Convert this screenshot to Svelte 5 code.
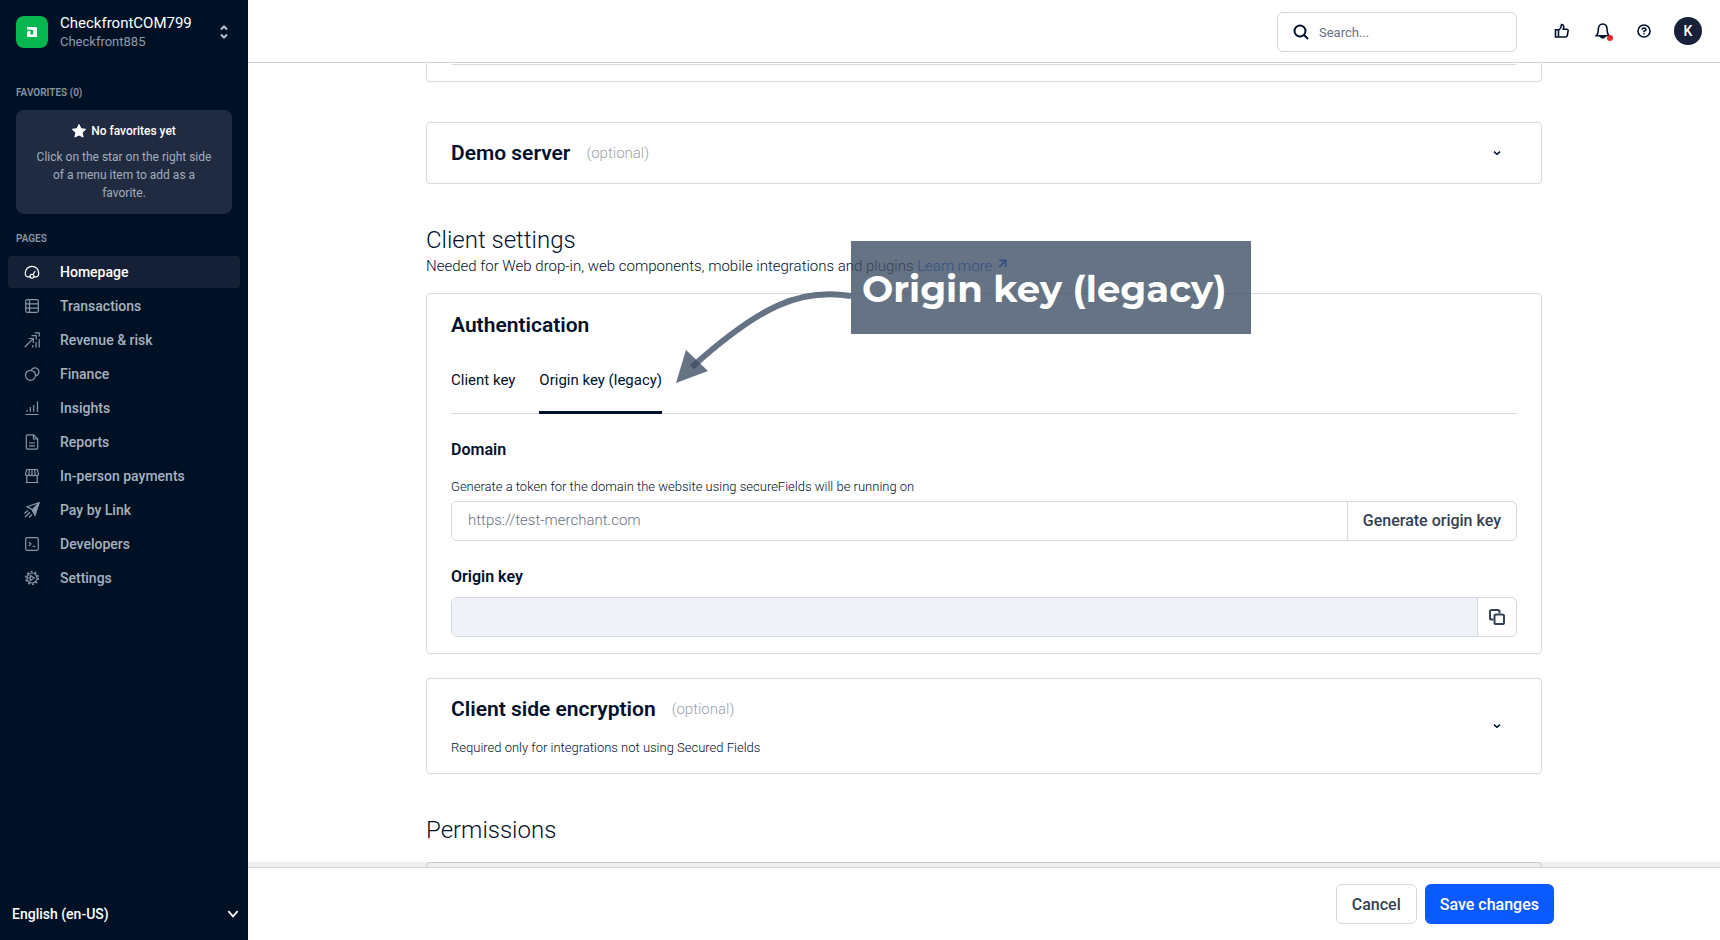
<script>
  // Sidebar
  const pages = ['Homepage', 'Transactions', 'Revenue & risk', 'Finance', 'Insights', 'Reports', 'In-person payments', 'Pay by Link', 'Developers', 'Settings'];
  let activePage = 'Homepage';
  let language = 'en-US';

  // Authentication card
  const tabs = ['Client key', 'Origin key (legacy)'];
  let activeTab = 'Origin key (legacy)';
  let domain = '';
  let originKey = '';
  let search = '';
</script>

<div class="app">
  <aside class="sidebar">
    <button class="account" type="button">
      <svg class="logo" viewBox="0 0 32 32" aria-hidden="true">
        <rect width="32" height="32" rx="8" fill="#06b650" />
        <path d="M11 11h8.500q1.500 0 1.500 1.500V21h-8.500q-1.500 0-1.500-1.500v-3q0-1.500 1.500-1.500h2v3.400h2.600v-4.600H11z" fill="#fff" />
      </svg>
      <span class="account-text">
        <span class="account-name">CheckfrontCOM799</span>
        <span class="account-sub">Checkfront885</span>
      </span>
      <svg class="sorter" viewBox="0 0 8 14" aria-hidden="true">
        <path d="M1 4.500 4 1.500 7 4.500M1 9.500l3 3 3-3" />
      </svg>
    </button>

    <h2 class="group-title">FAVORITES (0)</h2>
    <div class="favorites">
      <p class="favorites-title">
        <svg viewBox="0 0 14 14" aria-hidden="true"><path d="M7 .5 9 4.700l4.600.6-3.400 3.200.9 4.600L7 10.900l-4.100 2.200.9-4.600L.4 5.300 5 4.700z" fill="currentColor" stroke="currentColor" stroke-linejoin="round" /></svg>
        No favorites yet
      </p>
      <p class="favorites-hint">Click on the star on the right side of a menu item to add as a favorite.</p>
    </div>

    <h2 class="group-title pages-title">PAGES</h2>
    <nav>
      {#each pages as page}
        <a href="#top" class="nav-item" class:active={activePage === page} on:click|preventDefault={() => (activePage = page)}>
          <svg class="nav-icon" viewBox="0 0 16 16" aria-hidden="true">
            {#if page === 'Homepage'}
              <path d="M6 12.800H3.700C2.200 12.800 1.300 11 1.300 9a6.700 6.700 0 0 1 13.400 0c0 2-.9 3.800-2.400 3.800H10M9 10.500l2.300-3.500" />
              <circle cx="8" cy="12.300" r="1.900" />
            {:else if page === 'Transactions'}
              <rect x="1.700" y="1.700" width="12.600" height="12.600" rx="1.500" />
              <path d="M1.700 5.800h12.600M1.700 10.200h12.600M5.500 1.700v12.600" />
            {:else if page === 'Revenue & risk'}
              <path d="M.8 15 9 6.800M4.800 6.500h4.500V11M7.500 3.600h4.700v4M10.500.9h4.700v3.600M8.700 13v2.500M12 10v5.500M15.200 7v8.500" />
            {:else if page === 'Finance'}
              <circle cx="6.500" cy="9.300" r="5" />
              <path d="M7.300 4.200a4 4 0 1 1 4.400 5.600" />
            {:else if page === 'Insights'}
              <path d="M1.500 14.500h13M3 11.800V10M6.300 11.800V7M9.700 11.800V5M13.500 11.800V1.500" />
            {:else if page === 'Reports'}
              <path d="M9.500.8H3.700q-1.400 0-1.400 1.400v11.600q0 1.400 1.400 1.400h8.600q1.400 0 1.400-1.400V5zV5h4.200M5 9h6M5 11.800h6" />
            {:else if page === 'In-person payments'}
              <path d="M2.800 1.500h10.400l1.300 4.300q0 2-1.700 2t-1.700-2q0 2-1.600 2T8 5.800q0 2-1.500 2t-1.600-2q0 2-1.700 2t-1.700-2zM5.500 1.500l-.6 4.300M8 1.500v4.300M10.500 1.500l.6 4.300M2.800 7.800v6.700M13.200 7.800v6.700M1.500 14.500h13" />
            {:else if page === 'Pay by Link'}
              <path d="m3 4.700 12-4-4 12.300-2.800-5.200z" />
              <path d="m15 .7-4 12.300-2.800-5.200z" fill="currentColor" />
              <path d="M.5 11.500 3.800 8.500M1 15l5-4.800M5 15.500l3-3" />
            {:else if page === 'Developers'}
              <rect x="1.700" y="1.700" width="12.600" height="12.600" rx="1.500" />
              <path d="M4.800 5.800 7 8l-2.200 2.200M8.700 10.300h2.500" />
            {:else}
              <circle cx="8" cy="8" r="5" />
              <circle cx="8" cy="8" r="6.300" stroke-width="1.600" stroke-dasharray="1.800 2.150" />
              <path d="M6.300 5.400v5.200l4-2.600zM3 8h3" />
            {/if}
          </svg>
          {page}
        </a>
      {/each}
    </nav>

    <label class="language">
      <select bind:value={language} aria-label="Language">
        <option value="en-US">English (en-US)</option>
      </select>
      <svg viewBox="0 0 12 12" aria-hidden="true"><path d="M2 3.500 6 8l4-4.500" /></svg>
    </label>
  </aside>

  <div class="page">
    <header class="topbar">
      <label class="search">
        <svg viewBox="0 0 16 16" aria-hidden="true">
          <circle cx="7" cy="7" r="5.500" />
          <path d="m11 11 4 4" />
        </svg>
        <input type="search" placeholder="Search..." aria-label="Search" bind:value={search} />
      </label>
      <div class="actions">
        <button class="icon-button" type="button" aria-label="Feedback">
          <svg viewBox="0 0 16 16">
            <path d="M1.500 6.700h3v7.300h-3zM4.500 7.500C6.500 6 7.300 4.300 7.500 1.500c1.700 0 2.400 1 2.200 2.500l-.4 2.300h3.500q1.500.1 1.300 1.600l-.8 4.600q-.3 1.500-1.800 1.500h-7" />
          </svg>
        </button>
        <button class="icon-button" type="button" aria-label="Notifications">
          <svg viewBox="0 0 16 16">
            <path d="M1.300 12.700c1.500-1.500 2-3.500 2-6C3.300 3 5 1 7.700 1s4.400 2 4.400 5.700c0 2.500.5 4.500 2 6z" />
            <path d="M5.500 13.500q2.200 3 4.400 0z" fill="currentColor" />
          </svg>
          <span class="dot"></span>
        </button>
        <button class="icon-button" type="button" aria-label="Help">
          <svg viewBox="0 0 16 16">
            <circle cx="8" cy="8" r="6" />
            <path d="M6.100 6.700Q6.200 5 8 5t1.900 1.600Q9.900 7.600 8 8.300v.9M8 10.200v1.300" />
          </svg>
        </button>
      </div>
      <button class="avatar" type="button">K</button>
    </header>

    <main>
      <div class="content">
        <section class="card card-tail"><div class="tail-field"></div></section>

        <section class="card collapsed">
          <h3>Demo server <span class="optional">(optional)</span></h3>
          <button class="toggle" type="button" aria-label="Expand demo server">
            <svg viewBox="0 0 8 8"><path d="M1 2.700 4 5.300l3-2.600" /></svg>
          </button>
        </section>

        <h2 class="section-title">Client settings</h2>
        <p class="section-text">
          Needed for Web drop-in, web components, mobile integrations and plugins
          <a href="#learn">Learn more <svg viewBox="0 0 10 10" aria-hidden="true"><path d="M1.500 1.500h7v7M8.500 1.500l-7 7.500" /></svg></a>
        </p>

        <section class="card auth">
          <h3>Authentication</h3>
          <div class="tabs" role="tablist">
            {#each tabs as tab}
              <button type="button" role="tab" aria-selected={activeTab === tab} class:active={activeTab === tab} on:click={() => (activeTab = tab)}>{tab}</button>
            {/each}
          </div>

          <h4>Domain</h4>
          <label class="hint" for="domain">Generate a token for the domain the website using secureFields will be running on</label>
          <div class="field">
            <input id="domain" type="text" placeholder="https://test-merchant.com" bind:value={domain} />
            <button type="button">Generate origin key</button>
          </div>

          <label class="key-label" for="origin-key">Origin key</label>
          <div class="field">
            <input id="origin-key" class="readonly" type="text" readonly bind:value={originKey} />
            <button class="copy" type="button" aria-label="Copy origin key">
              <svg viewBox="0 0 16 16">
                <path d="M4.500 10.500H2.600Q1 10.500 1 8.900V2.600Q1 1 2.600 1h6.300q1.600 0 1.600 1.600v1.700" />
                <rect x="5.500" y="5.500" width="9.500" height="9.500" rx="1.600" />
              </svg>
            </button>
          </div>

          <div class="annotation">
            <svg viewBox="0 0 175 142" aria-hidden="true">
              <path class="arrow-line" d="M175 55C125 47 85 64 16 126" />
              <path class="arrow-head" d="M0 142 10 109l22 21z" />
            </svg>
            <div class="annotation-label">Origin key (legacy)</div>
          </div>
        </section>

        <section class="card collapsed tall">
          <div>
            <h3>Client side encryption <span class="optional">(optional)</span></h3>
            <p class="hint">Required only for integrations not using Secured Fields</p>
          </div>
          <button class="toggle" type="button" aria-label="Expand client side encryption">
            <svg viewBox="0 0 8 8"><path d="M1 2.700 4 5.300l3-2.600" /></svg>
          </button>
        </section>

        <h2 class="section-title">Permissions</h2>
        <section class="card permissions-card"></section>
      </div>
    </main>

    <footer>
      <button class="cancel" type="button">Cancel</button>
      <button class="save" type="button">Save changes</button>
    </footer>
  </div>
</div>

<style>
  :global(body) {
    margin: 0;
  }

  .app {
    display: flex;
    height: 100vh;
    overflow: hidden;
    font-family: Roboto, 'Liberation Sans', sans-serif;
    color: #00112c;
    background: #fff;
  }

  .app * {
    box-sizing: border-box;
  }

  h2, h3, h4, p {
    margin: 0;
  }

  button, input, select {
    font-family: inherit;
    color: inherit;
  }

  button {
    padding: 0;
    border: 0;
    background: none;
    cursor: pointer;
  }

  svg {
    display: block;
    flex: none;
    fill: none;
    stroke: currentColor;
  }

  /* Sidebar */
  .sidebar {
    display: flex;
    flex-direction: column;
    flex: none;
    width: 248px;
    background: #001126;
    color: #fff;
  }

  .account {
    display: flex;
    align-items: center;
    gap: 12px;
    padding: 13px 20px 13px 16px;
    text-align: left;
    color: #fff;
  }

  .logo {
    width: 32px;
    height: 32px;
    stroke: none;
  }

  .account-text {
    flex: 1;
  }

  .account-name, .account-sub {
    display: block;
    font-size: 15px;
    line-height: 20px;
  }

  .account-sub {
    font-size: 13px;
    line-height: 18px;
    color: #8f9baa;
  }

  .sorter {
    width: 8px;
    height: 14px;
    color: #b4bcc8;
    stroke-width: 2px;
  }

  .group-title {
    padding: 0 16px;
    margin-top: 21px;
    font-size: 10px;
    line-height: 16px;
    font-weight: 600;
    color: #8995a6;
  }

  .favorites {
    margin: 9px 16px 0;
    padding: 12px 16px;
    border-radius: 8px;
    background: #202b41;
    text-align: center;
  }

  .favorites-title {
    display: flex;
    justify-content: center;
    gap: 5px;
    margin-bottom: 8px;
    font-size: 12px;
    line-height: 18px;
    font-weight: 500;
  }

  .favorites-title svg {
    width: 14px;
    height: 14px;
    margin-top: 2px;
  }

  .favorites-hint {
    font-size: 12px;
    line-height: 18px;
    color: #a3adbb;
  }

  .pages-title {
    margin-top: 17px;
  }

  nav {
    display: flex;
    flex-direction: column;
    gap: 2px;
    padding: 9px 8px 0;
  }

  .nav-item {
    display: flex;
    align-items: center;
    gap: 20px;
    height: 32px;
    padding: 0 16px;
    border-radius: 4px;
    font-size: 14px;
    font-weight: 500;
    text-decoration: none;
    color: #a6b1bf;
  }

  .nav-item.active {
    background: #151f35;
    color: #fff;
  }

  .nav-icon {
    width: 16px;
    height: 16px;
    color: #8a96a5;
    stroke-width: 1.2px;
  }

  .active .nav-icon {
    color: #fff;
  }

  .language {
    display: flex;
    align-items: center;
    margin-top: auto;
    padding: 0 8px 16px 12px;
  }

  .language select {
    flex: 1;
    padding: 0;
    border: 0;
    appearance: none;
    background: transparent;
    font-size: 14px;
    line-height: 20px;
    font-weight: 500;
  }

  .language svg {
    width: 14px;
    height: 14px;
    stroke-width: 1.5px;
  }

  /* Top bar */
  .page {
    display: flex;
    flex: 1;
    flex-direction: column;
    min-width: 0;
  }

  .topbar {
    display: flex;
    align-items: center;
    justify-content: flex-end;
    flex: none;
    height: 63px;
    padding: 0 18px;
    border-bottom: 1px solid #d0d3da;
  }

  .search {
    display: flex;
    align-items: center;
    gap: 10px;
    width: 240px;
    height: 40px;
    margin-top: 2px;
    padding: 0 15px;
    border: 1px solid #d5d8de;
    border-radius: 6px;
  }

  .search svg {
    width: 16px;
    height: 16px;
    stroke-width: 2px;
  }

  .search input {
    flex: 1;
    min-width: 0;
    padding: 0;
    border: 0;
    outline: 0;
    font-size: 13px;
  }

  input::placeholder {
    color: #687282;
    opacity: 1;
  }

  .actions {
    display: flex;
    gap: 25px;
    margin: 0 22px 0 37px;
  }

  .icon-button {
    position: relative;
  }

  .icon-button svg {
    width: 16px;
    height: 16px;
    stroke-width: 1.6px;
  }

  .dot {
    position: absolute;
    right: -2px;
    bottom: -2px;
    width: 6px;
    height: 6px;
    border-radius: 50%;
    background: #e22d2d;
  }

  .avatar {
    width: 28px;
    height: 28px;
    border-radius: 50%;
    background: #17223a;
    color: #fff;
    font-size: 14px;
    font-weight: 500;
  }

  /* Content */
  main {
    flex: 1;
    min-height: 0;
    overflow: hidden;
    padding: 0 24px;
  }

  .content {
    max-width: 1116px;
    margin: 0 auto;
  }

  .card {
    position: relative;
    padding: 0 24px;
    border: 1px solid #d8dade;
    border-radius: 4px;
  }

  .card-tail {
    margin-bottom: 40px;
    padding-bottom: 16px;
    border-top: 0;
    border-radius: 0 0 4px 4px;
  }

  .tail-field {
    height: 2px;
    border-bottom: 1px solid #d8dade;
    border-radius: 0 0 4px 4px;
  }

  h3 {
    display: flex;
    align-items: center;
    gap: 16px;
    font-size: 21px;
    line-height: 28px;
    font-weight: 600;
  }

  .optional {
    font-size: 15px;
    font-weight: 300;
    color: #99a3ad;
  }

  .collapsed {
    display: flex;
    align-items: center;
    justify-content: space-between;
    height: 62px;
  }

  .tall {
    height: 96px;
    margin-top: 24px;
  }

  .toggle {
    margin-right: 16px;
  }

  .toggle svg {
    width: 8px;
    height: 8px;
    stroke-width: 1.6px;
  }

  .section-title {
    margin-top: 40px;
    font-size: 24px;
    line-height: 32px;
    font-weight: 300;
  }

  .section-text {
    margin-bottom: 17px;
    font-size: 15px;
    line-height: 20px;
    font-weight: 300;
  }

  .section-text a {
    color: #0059ff;
    text-decoration: none;
  }

  .section-text svg {
    display: inline;
    width: 9px;
    height: 9px;
    margin-left: 2px;
    vertical-align: 3px;
    stroke-width: 2px;
  }

  .auth {
    padding-top: 17px;
    padding-bottom: 16px;
  }

  .tabs {
    display: flex;
    gap: 24px;
    margin-top: 15px;
    border-bottom: 1px solid #d8dade;
  }

  .tabs button {
    height: 60px;
    margin-bottom: -1px;
    padding: 0 0 6px;
    border-bottom: 3px solid transparent;
    font-size: 15px;
  }

  .tabs .active {
    border-color: #00112c;
  }

  h4, .key-label {
    display: block;
    font-size: 16px;
    line-height: 24px;
    font-weight: 600;
  }

  h4 {
    margin-top: 24px;
  }

  .hint {
    display: block;
    margin-top: 15px;
    font-size: 13px;
    line-height: 20px;
    font-weight: 300;
  }

  .field {
    display: flex;
    height: 40px;
    margin-top: 4px;
    overflow: hidden;
    border: 1px solid #d3d6dd;
    border-radius: 6px;
  }

  .field input {
    flex: 1;
    min-width: 0;
    padding: 0 16px 2px;
    border: 0;
    outline: 0;
    font-size: 15px;
    font-weight: 300;
  }

  .field .readonly {
    background: #eff3f8;
  }

  .field button {
    padding: 0 15px 2px;
    border-left: 1px solid #d3d6dd;
    font-size: 16px;
    font-weight: 500;
    color: #343f54;
  }

  .field .copy {
    padding: 0 11px;
  }

  .copy svg {
    width: 16px;
    height: 16px;
    stroke-width: 2px;
  }

  .key-label {
    margin-top: 24px;
  }

  .key-label + .field {
    margin-top: 8px;
  }

  .permissions-card {
    height: 40px;
    margin-top: 16px;
  }

  /* Callout drawn over the card */
  .annotation {
    position: absolute;
    top: -53px;
    left: 249px;
    display: flex;
    pointer-events: none;
  }

  .annotation svg {
    width: 175px;
    height: 142px;
  }

  .arrow-line {
    stroke: rgba(61, 78, 99, 0.79);
    stroke-width: 6px;
  }

  .arrow-head {
    fill: rgba(61, 78, 99, 0.79);
    stroke: none;
  }

  .annotation-label {
    width: 400px;
    height: 93px;
    padding: 0 11px;
    background: rgba(61, 78, 99, 0.79);
    font-family: Montserrat, Inter, sans-serif;
    font-size: 37px;
    line-height: 95px;
    font-weight: 700;
    white-space: nowrap;
    color: #fff;
  }

  /* Footer */
  footer {
    position: relative;
    display: flex;
    align-items: center;
    justify-content: flex-end;
    gap: 8px;
    flex: none;
    height: 73px;
    padding: 0 166px;
    border-top: 1px solid #d3d5db;
    background: #fff;
    box-shadow: 0 -5px 0 rgba(0, 17, 44, 0.07);
  }

  footer button {
    height: 40px;
    padding: 0 15px;
    border-radius: 6px;
    font-size: 16px;
    font-weight: 500;
  }

  .cancel {
    border: 1px solid #d3d6dd;
    color: #343f54;
  }

  .save {
    background: #0a5aff;
    color: #fff;
  }
</style>
